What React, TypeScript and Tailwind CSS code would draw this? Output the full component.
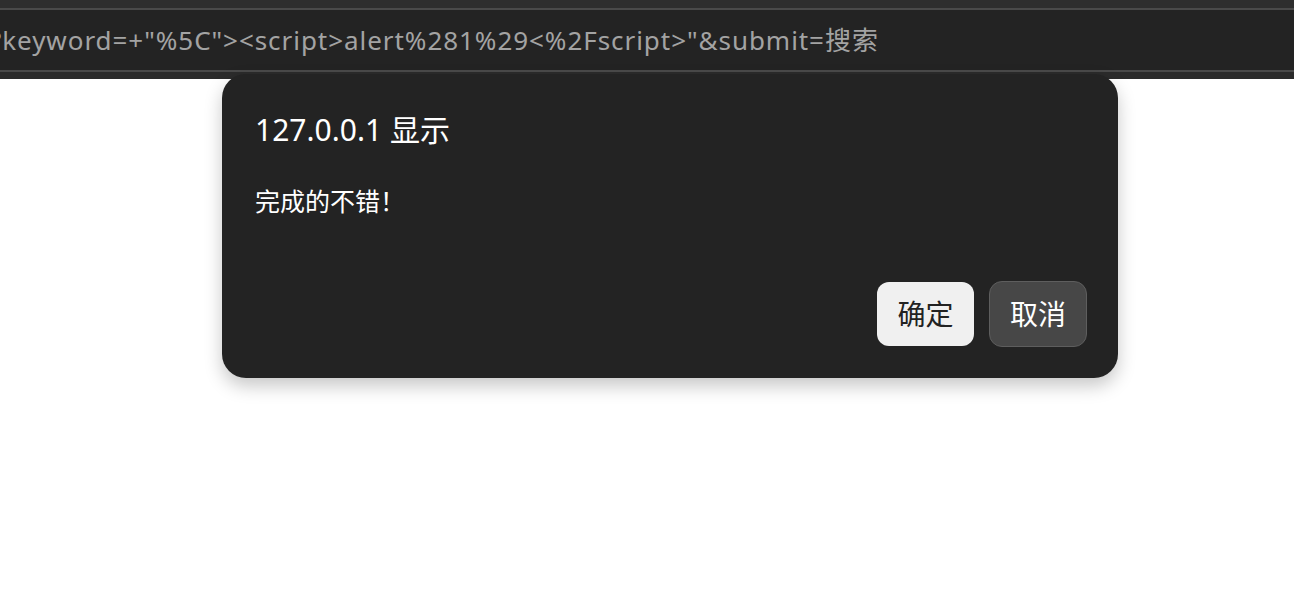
import React from "react";

export default function App() {
  return (
    <div
      className="relative h-[614px] w-[1294px] overflow-hidden bg-white"
      style={{ fontFamily: '"Noto Sans", "Noto Sans CJK SC", sans-serif' }}
    >
      <div className="flex h-[79px] flex-col bg-[#2b2b2b]">
        <div className="h-[8px] bg-[#2e2e2e]" />
        <div className="h-[2px] bg-[#4a4a4a]" />
        <div className="flex h-[60px] items-center overflow-hidden bg-[#232323]">
          <span className="ml-[-10px] whitespace-nowrap text-[26px] leading-none tracking-[0.95px] text-[#a3a3a3]">
            ?keyword=+"%5C"&gt;&lt;script&gt;alert%281%29&lt;%2Fscript&gt;"&amp;submit=搜索
          </span>
        </div>
        <div className="h-[2px] bg-[#4a4a4a]" />
      </div>

      <div className="absolute left-[222px] top-[74px] flex h-[304px] w-[896px] flex-col rounded-[24px] bg-[#232323] pl-[33px] pr-[31px] pt-[36px] shadow-[0_8px_18px_rgba(0,0,0,0.22)]">
        <div className="text-[30px] leading-[40px] text-white">127.0.0.1 显示</div>
        <div className="mt-[36px] text-[25px] leading-[30px] text-white">完成的不错！</div>
        <div className="mt-auto mb-[31px] flex items-center justify-end gap-[15px]">
          <button className="h-[64px] w-[97px] rounded-[12px] bg-[#f0f0f0] text-[28px] leading-none text-[#222]">
            确定
          </button>
          <button className="h-[66px] w-[98px] rounded-[13px] border border-[#5e5e5e] bg-[#474747] text-[28px] leading-none text-white">
            取消
          </button>
        </div>
      </div>
    </div>
  );
}
